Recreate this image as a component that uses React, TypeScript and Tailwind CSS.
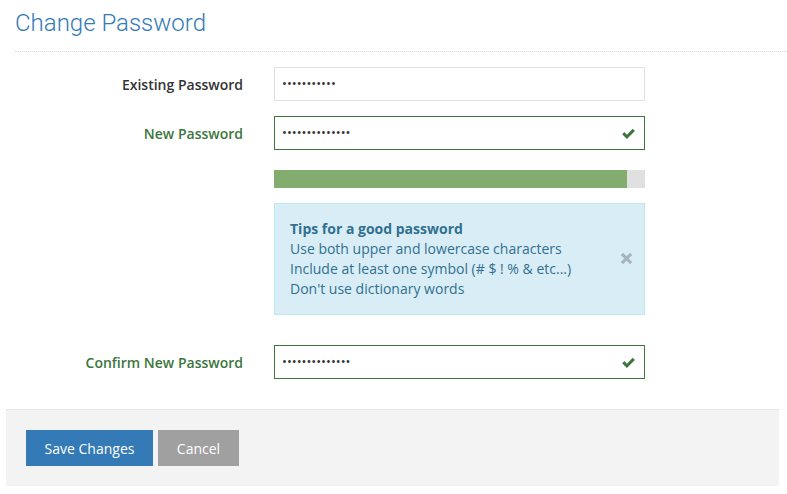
import { useState } from "react";

const Check = () => (
  <svg viewBox="0 0 16 16" className="w-[15px] h-[15px]" fill="#3c763d">
    <path d="M1.3 8.8 L3.6 6.5 L6.3 9.2 L12.5 3 L14.8 5.3 L6.3 13.8 Z" />
  </svg>
);

const CloseX = () => (
  <svg viewBox="0 0 14 14" className="w-[13px] h-[13px]" stroke="#a6b4bb" strokeWidth="3.4" strokeLinecap="butt">
    <path d="M2 2 L12 12 M12 2 L2 12" />
  </svg>
);

const App = () => {
  const [showTips, setShowTips] = useState(true);

  return (
    <div className="w-[787px] h-[494px] bg-white font-['Open_Sans',sans-serif] text-[14px] text-[#333]">
      <div className="pl-[15px]">
        <h1 className="font-['Roboto',sans-serif] font-light text-[24px] leading-[44px] text-[#337ab7] pt-[1px]">
          Change Password
        </h1>
        <div className="mt-[6px] border-b border-dotted border-[#d8d8d8]" />
      </div>

      <div className="flex flex-col pt-[15px]">
        <div className="flex items-center">
          <label className="w-[243px] text-right font-semibold">Existing Password</label>
          <div className="ml-[31px] w-[371px] h-[34px] border border-[#e0e0e0] flex items-center px-[7px]">
            <input
              type="password"
              defaultValue="abcdefghijk"
              className="w-full outline-none text-[13px] text-[#333] bg-transparent"
            />
          </div>
        </div>

        <div className="flex items-center mt-[15px]">
          <label className="w-[243px] text-right font-semibold text-[#3c763d]">New Password</label>
          <div className="ml-[31px] w-[371px] h-[34px] border border-[#3c763d] flex items-center pl-[7px] pr-[8px]">
            <input
              type="password"
              defaultValue="abcdefghijklmn"
              className="flex-1 outline-none text-[13px] text-[#333] bg-transparent"
            />
            <Check />
          </div>
        </div>

        <div className="ml-[274px] mt-[20px] w-[371px] h-[18px] bg-[#e0e0e0]">
          <div className="h-full bg-[#82ad6e]" style={{ width: "95.2%" }} />
        </div>

        <div className="ml-[274px] mt-[15px] w-[371px] h-[112px]">
          {showTips && (
            <div className="h-full bg-[#d9edf7] border border-[#bce8f1] text-[#31708f] flex items-center pl-[15px] pr-[11px]">
              <div className="flex-1 leading-[20px]">
                <p className="font-bold">Tips for a good password</p>
                <p>Use both upper and lowercase characters</p>
                <p>Include at least one symbol (# $ ! % &amp; etc...)</p>
                <p>Don't use dictionary words</p>
              </div>
              <button
                type="button"
                onClick={() => setShowTips(false)}
                className="mb-[2px]"
                aria-label="Close"
              >
                <CloseX />
              </button>
            </div>
          )}
        </div>

        <div className="flex items-center mt-[30px]">
          <label className="w-[243px] text-right font-semibold text-[#3c763d]">Confirm New Password</label>
          <div className="ml-[31px] w-[371px] h-[34px] border border-[#3c763d] flex items-center pl-[7px] pr-[8px]">
            <input
              type="password"
              defaultValue="abcdefghijklmn"
              className="flex-1 outline-none text-[13px] text-[#333] bg-transparent"
            />
            <Check />
          </div>
        </div>
      </div>

      <div className="mt-[30px] mx-[6px] w-[773px] h-[77px] bg-[#f3f3f3] border-t border-[#e5e5e5] flex items-center gap-[5px] pl-[20px]">
        <button type="button" className="h-[36px] w-[127px] bg-[#337ab7] text-white text-[14px]">
          Save Changes
        </button>
        <button type="button" className="h-[36px] w-[81px] bg-[#a0a0a0] text-white text-[14px]">
          Cancel
        </button>
      </div>
    </div>
  );
};

export default App;
